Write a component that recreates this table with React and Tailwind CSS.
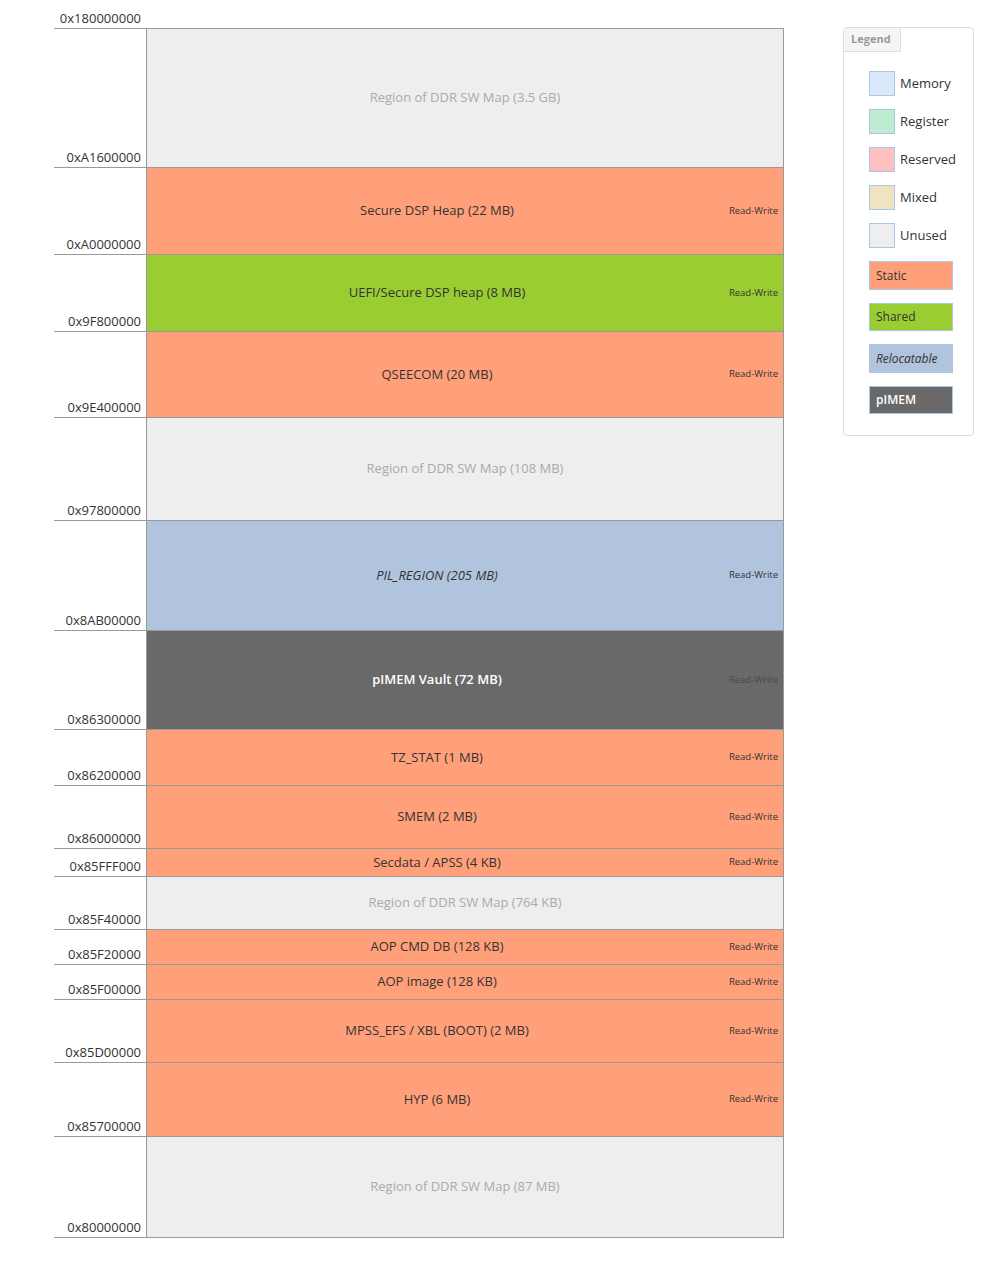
import React from "react";

const rows = [
  { addr: "0xA1600000", h: 139, name: "Region of DDR SW Map (3.5 GB)", kind: "unused" },
  { addr: "0xA0000000", h: 87, name: "Secure DSP Heap (22 MB)", kind: "static" },
  { addr: "0x9F800000", h: 77, name: "UEFI/Secure DSP heap (8 MB)", kind: "shared" },
  { addr: "0x9E400000", h: 86, name: "QSEECOM (20 MB)", kind: "static" },
  { addr: "0x97800000", h: 103, name: "Region of DDR SW Map (108 MB)", kind: "unused" },
  { addr: "0x8AB00000", h: 110, name: "PIL_REGION (205 MB)", kind: "reloc" },
  { addr: "0x86300000", h: 99, name: "pIMEM Vault (72 MB)", kind: "pimem" },
  { addr: "0x86200000", h: 56, name: "TZ_STAT (1 MB)", kind: "static" },
  { addr: "0x86000000", h: 63, name: "SMEM (2 MB)", kind: "static" },
  { addr: "0x85FFF000", h: 28, name: "Secdata / APSS (4 KB)", kind: "static" },
  { addr: "0x85F40000", h: 53, name: "Region of DDR SW Map (764 KB)", kind: "unused" },
  { addr: "0x85F20000", h: 35, name: "AOP CMD DB (128 KB)", kind: "static" },
  { addr: "0x85F00000", h: 35, name: "AOP image (128 KB)", kind: "static" },
  { addr: "0x85D00000", h: 63, name: "MPSS_EFS / XBL (BOOT) (2 MB)", kind: "static" },
  { addr: "0x85700000", h: 74, name: "HYP (6 MB)", kind: "static" },
  { addr: "0x80000000", h: 101, name: "Region of DDR SW Map (87 MB)", kind: "unused" },
];

const cellStyles = {
  static: "bg-[#ffa07a] text-[#333]",
  shared: "bg-[#9acd32] text-[#333]",
  reloc: "bg-[#b0c4de] text-[#333] italic",
  pimem: "bg-[#696969] text-white font-semibold",
};

const MapRow = ({ row }) => (
  <div className="flex" style={{ height: row.h }}>
    <div className="w-[92px] flex-none border-b border-[#999] flex items-end justify-end pr-[5px] pb-[2px] text-[13px] leading-4 text-[#333]">
      {row.addr}
    </div>
    <div className="flex-1 flex border-l border-r border-b border-[#999]">
      {row.kind === "unused" ? (
        <div className="flex-1 bg-[#eeeeee] text-[#aaa] text-[13px] flex items-center justify-center">
          {row.name}
        </div>
      ) : (
        <div className={"flex-1 flex " + cellStyles[row.kind]}>
          <div className="flex-1 flex items-center justify-center text-[13px]">{row.name}</div>
          <div
            className={
              "w-[56px] flex items-center justify-end pr-[5px] whitespace-nowrap text-[9.5px] font-normal not-italic " +
              (row.kind === "pimem" ? "text-[#4a4a4a]" : "text-[#333]")
            }
          >
            Read-Write
          </div>
        </div>
      )}
    </div>
  </div>
);

const smallItems = [
  { label: "Memory", color: "bg-[#dae8fc]" },
  { label: "Register", color: "bg-[#bdecd0]" },
  { label: "Reserved", color: "bg-[#ffc0c0]" },
  { label: "Mixed", color: "bg-[#f0e3bf]" },
  { label: "Unused", color: "bg-[#eeeeee]" },
];

const wideItems = [
  { label: "Static", cls: "bg-[#ffa07a] text-[#333] h-[29px]" },
  { label: "Shared", cls: "bg-[#9acd32] text-[#333] h-[28px]" },
  { label: "Relocatable", cls: "bg-[#b0c4de] text-[#333] italic h-[29px]" },
  { label: "pIMEM", cls: "bg-[#696969] text-white font-semibold h-[28px]" },
];

const Legend = () => (
  <div className="w-[131px] border border-[#ddd] rounded-[4px] mt-[27px] pb-[21px]">
    <div className="w-[57px] h-[24px] bg-[#f5f5f5] border-r border-b border-[#ddd] rounded-br-[3px] rounded-tl-[3px] text-[11px] font-bold text-[#999] flex items-center pl-[7px]">
      Legend
    </div>
    <div className="pl-[25px] pt-[19px] flex flex-col gap-[13px]">
      {smallItems.map((it) => (
        <div key={it.label} className="flex items-center gap-[5px]">
          <div className={"w-[26px] h-[25px] border border-[#a9c6e4] " + it.color} />
          <span className="text-[13px] text-[#333]">{it.label}</span>
        </div>
      ))}
      {wideItems.map((it) => (
        <div
          key={it.label}
          className={"w-[84px] border border-[#a9c6e4] flex items-center pl-[6px] text-[12px] " + it.cls}
        >
          {it.label}
        </div>
      ))}
    </div>
  </div>
);

export default function App() {
  return (
    <div
      className="w-[989px] min-h-[1273px] bg-white flex"
      style={{ fontFamily: '"Open Sans", "Noto Sans", sans-serif' }}
    >
      <div className="ml-[54px] w-[730px] flex-none">
        <div className="w-[92px] h-[28px] flex items-end justify-end pr-[5px] pb-[2px] text-[13px] leading-4 text-[#333]">
          0x180000000
        </div>
        <div className="border-t border-[#999]">
          {rows.map((r) => (
            <MapRow key={r.addr} row={r} />
          ))}
        </div>
      </div>
      <div className="ml-[59px]">
        <Legend />
      </div>
    </div>
  );
}
